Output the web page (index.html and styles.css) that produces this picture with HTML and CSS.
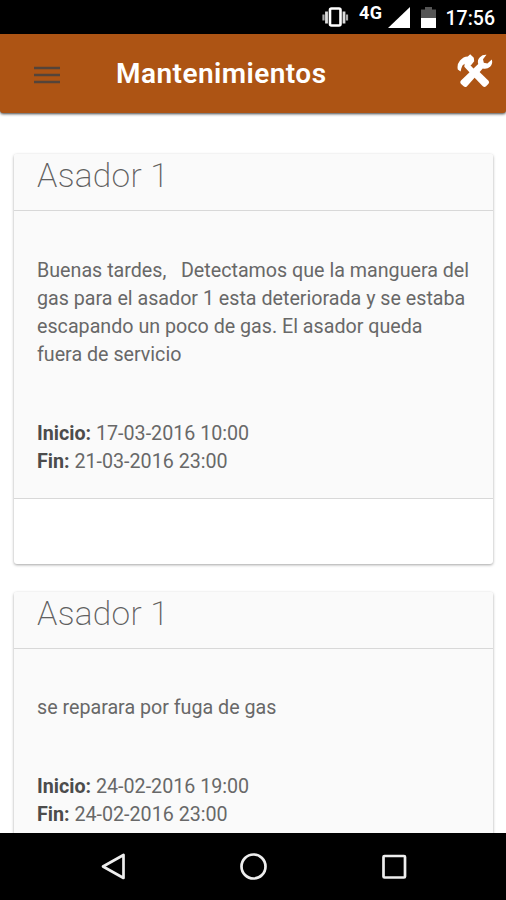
FILE: index.html
```html
<!DOCTYPE html>
<html lang="es">
<head>
<meta charset="utf-8">
<title>Mantenimientos</title>
<link rel="stylesheet" href="styles.css">
</head>
<body>
<div class="screen">
  <div class="status">
    <svg class="vibrate" width="28" height="22" viewBox="0 0 28 22"><rect x="9" y="1.500" width="10.500" height="17" rx="1.500" fill="none" stroke="#fff" stroke-width="2.600"/><path d="M5.500 4.500v12M23 4.500v12" stroke="#ddd" stroke-width="2.800"/><path d="M2.500 7.500v6M26 7.500v6" stroke="#aaa" stroke-width="2.200"/></svg>
    <span class="network">4G</span>
    <svg class="signal" width="22" height="21" viewBox="0 0 22 21"><path d="M0 21L22 0v21z" fill="#fff"/></svg>
    <svg class="battery" width="15" height="21" viewBox="0 0 15 21"><path d="M0 2.500h4V0h7v2.500h4V11H0z" fill="#555"/><path d="M0 11h15v10H0z" fill="#fff"/></svg>
    <span class="clock">17:56</span>
  </div>
  <header class="toolbar">
    <svg class="menu" width="26" height="18" viewBox="0 0 26 18"><path d="M0 2h26M0 9h26M0 16h26" stroke="#54443a" stroke-width="2.600"/></svg>
    <h1 class="title">Mantenimientos</h1>
    <svg class="tools" width="36" height="34" viewBox="0 0 36 34">
      <path d="M29.500.8L26 5.200l.8 3.600 3.600.8 4.400-4.200q1.200 4.200-1.700 7.300-3 2.900-7.300 1.900L9.800 32.500q-1.700 1.300-3.200-.2l-2.800-2.600q-1.300-1.600.2-3.100L21.200 10Q20 6 22.900 3.200q2.600-2.700 6.600-2.400z" fill="#fff"/>
      <path d="M21 16.500l10.500 10.300q1.300 1.500 0 3l-2.400 2.500q-1.700 1.500-3.300 0l-9.600-10z" fill="#fff"/>
      <path d="M10.800 2.500L13.200.2l3.600 3.600.4 3.400-3 3.700-.8.300 6.300 6.800-3.800 4.100-8.600-9.400.3-2.900Q5 11 4.300 14.500l-.7 2.900-2.800-1.800Q-.3 10.500 3 6.600q3.200-3.900 7.800-4.100z" fill="#fff"/>
    </svg>
  </header>
  <main class="content">
    <article class="card">
      <h2 class="card-title">Asador 1</h2>
      <div class="card-body">
        <p class="text">Buenas tardes, &nbsp; Detectamos que la manguera del<br>gas para el asador 1 esta deteriorada y se estaba<br>escapando un poco de gas. El asador queda<br>fuera de servicio</p>
        <p class="dates"><b>Inicio:</b> 17-03-2016 10:00<br><b>Fin:</b> 21-03-2016 23:00</p>
      </div>
      <div class="card-footer"></div>
    </article>
    <article class="card">
      <h2 class="card-title">Asador 1</h2>
      <div class="card-body">
        <p class="text">se reparara por fuga de gas</p>
        <p class="dates"><b>Inicio:</b> 24-02-2016 19:00<br><b>Fin:</b> 24-02-2016 23:00</p>
      </div>
      <div class="card-footer"></div>
    </article>
  </main>
  <nav class="navbar">
    <svg width="28" height="30" viewBox="0 0 28 30"><path d="M3 15.500L23.500 4v23z" fill="none" stroke="#eee" stroke-width="2.700" stroke-linejoin="round"/></svg>
    <svg width="28" height="30" viewBox="0 0 28 30"><circle cx="13.500" cy="15.500" r="12" fill="none" stroke="#eee" stroke-width="2.700"/></svg>
    <svg width="28" height="30" viewBox="0 0 28 30"><rect x="3.500" y="5" width="21.500" height="21.500" rx="1" fill="none" stroke="#eee" stroke-width="2.700"/></svg>
  </nav>
</div>
</body>
</html>
```
FILE: styles.css
```css
* { box-sizing: border-box; }
body, h1, h2, p { margin: 0; }
body { font-family: Roboto, "Liberation Sans", sans-serif; background: #fff; }
svg { display: block; flex: none; }
.screen { display: flex; flex-direction: column; width: 506px; height: 900px; overflow: hidden; }
.status {
  flex: none; display: flex; align-items: flex-start; justify-content: flex-end;
  height: 34px; padding-right: 11px; background: #000; color: #fff;
}
.vibrate { margin: 7px 10px 0 0; }
.network { margin: 3px 5px 0 0; font-size: 18px; line-height: 20px; font-weight: 700; letter-spacing: .4px; }
.signal { margin: 7px 11px 0 0; }
.battery { margin: 7px 10px 0 0; }
.clock { font-size: 19.500px; line-height: 24px; margin-top: 7px; font-weight: 500; }
.toolbar {
  flex: none; display: flex; align-items: center; height: 79px; padding: 0 13px 0 34px;
  background: #ad5414; border-radius: 0 0 3px 3px; box-shadow: 0 1px 3px rgba(0,0,0,.75); z-index: 1;
}
.menu { margin-top: 2px; }
.title { margin-left: 56px; font-size: 28px; line-height: 32px; font-weight: 600; letter-spacing: .45px; color: #fff; }
.tools { margin: -5px 0 0 auto; }
.content { flex: 1; min-height: 0; overflow: hidden; padding: 41px 13px 0 14px; }
.card {
  margin-bottom: 28px; border-radius: 3px; overflow: hidden; background: #fff;
  box-shadow: 0 1px 3px rgba(0,0,0,.36);
}
.card-title {
  height: 57px; padding-left: 23px; background: #fafafa; border-bottom: 1px solid #d8d8d8;
  font-size: 33.500px; line-height: 44px; font-weight: 200; letter-spacing: .3px; color: #606060;
}
.card-body {
  padding: 45.500px 23px 21.500px; background: #fafafa; border-bottom: 1px solid #d8d8d8;
  font-size: 19.680px; line-height: 28.100px; color: #686868;
}
.text { white-space: nowrap; }
.dates { margin-top: 51px; }
.dates b { font-weight: 700; color: #4c4c4c; }
.card-footer { height: 65px; }
.navbar {
  flex: none; display: flex; align-items: flex-start; justify-content: space-between;
  height: 67px; padding: 18px 98px 0 100px; background: #000;
}
```
